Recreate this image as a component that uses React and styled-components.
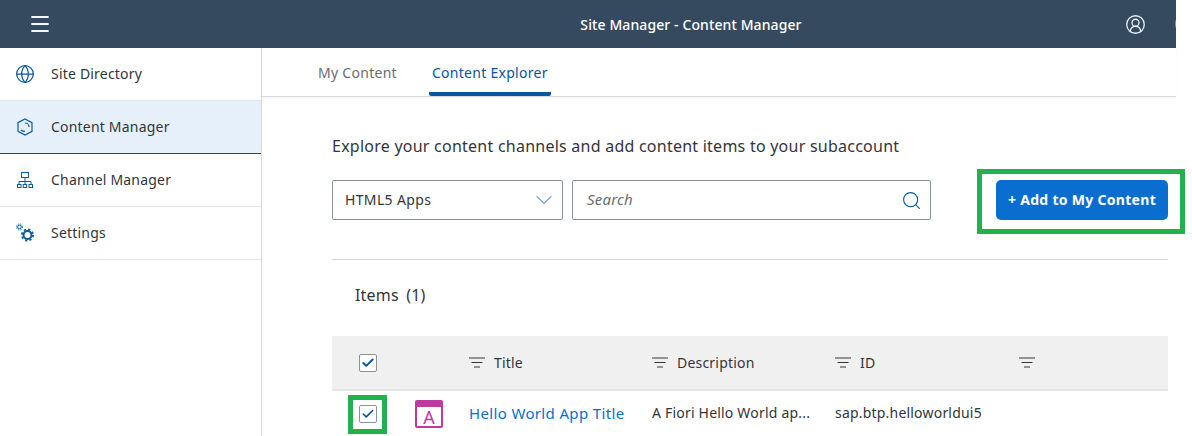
import React from "react";
import styled, { createGlobalStyle } from "styled-components";
import { Globe, Search, ChevronDown, Menu, Check, CircleUserRound } from "lucide-react";

const GlobalStyle = createGlobalStyle`
  html, body {
    margin: 0;
    height: 100%;
    background: #fff;
    overflow: hidden;
    font-family: "Noto Sans", "Open Sans", sans-serif;
    color: #32363a;
    letter-spacing: 0.2px;
  }
`;

const Page = styled.div`
  width: 1176px;
  height: 436px;
  display: flex;
  flex-direction: column;
`;

const Header = styled.header`
  height: 48px;
  flex: none;
  background: #354a5f;
  color: #fff;
  display: grid;
  grid-template-columns: 262px 1fr 56px;
  align-items: center;
  overflow: hidden;
`;

const MenuButton = styled.div`
  padding-left: 28px;
  display: flex;
  color: #f2f7fd;
`;

const HeaderTitle = styled.div`
  text-align: center;
  font-size: 14px;
  font-weight: 500;
  letter-spacing: 0.1px;
`;

const HeaderRight = styled.div`
  display: flex;
  align-items: center;
  gap: 29px;
  padding-left: 5px;
  color: #e4effb;
  svg {
    flex: none;
  }
`;

const Avatar = styled.div`
  width: 22px;
  height: 22px;
  flex: none;
  border-radius: 50%;
  border: 2px solid #5aa6ee;
  box-sizing: border-box;
`;

const Body = styled.div`
  flex: 1;
  display: flex;
  min-height: 0;
`;

const Sidebar = styled.nav`
  width: 261px;
  flex: none;
  border-right: 1px solid #d9d9d9;
`;

const NavItem = styled.div`
  height: 52px;
  display: flex;
  align-items: center;
  gap: 16px;
  padding-left: 15px;
  font-size: 14px;
  background: ${(p) => (p.$active ? "#e5f0fa" : "#fff")};
  border-bottom: 1px solid ${(p) => (p.$active ? "#0a4f92" : "#e5e5e5")};
  svg {
    color: #0b5aa0;
    flex: none;
  }
`;

const NavLabel = styled.span`
  padding-bottom: 2px;
`;

const Main = styled.main`
  flex: 1;
  min-width: 0;
`;

const TabBar = styled.div`
  height: 48px;
  display: flex;
  gap: 29px;
  padding-left: 53px;
  border-bottom: 1px solid #d9d9d9;
  box-shadow: 0 1px 2px rgba(0, 0, 0, 0.06);
`;

const Tab = styled.div`
  padding: 0 3px;
  font-size: 14px;
  letter-spacing: 0.28px;
  line-height: 50px;
  height: 44px;
  color: ${(p) => (p.$active ? "#0854a0" : "#6a6d70")};
  border-bottom: ${(p) => (p.$active ? "4px solid #0854a0" : "none")};
  border-radius: 0 0 2px 2px;
`;

const Content = styled.section`
  padding: 39px 8px 0 70px;
`;

const Heading = styled.h2`
  margin: 0;
  font-size: 16px;
  font-weight: 400;
  line-height: 20px;
  letter-spacing: 0.24px;
`;

const Toolbar = styled.div`
  display: flex;
  align-items: center;
  margin-top: 24px;
  padding-bottom: 39px;
  border-bottom: 1px solid #d9d9d9;
`;

const Select = styled.div`
  width: 231px;
  height: 40px;
  box-sizing: border-box;
  border: 1px solid #89919a;
  border-radius: 2px;
  display: flex;
  align-items: center;
  justify-content: space-between;
  padding: 0 4px 0 12px;
  font-size: 14px;
  letter-spacing: 0.35px;
  svg {
    color: #0b5aa0;
  }
`;

const SearchBox = styled.div`
  width: 359px;
  height: 40px;
  margin-left: 9px;
  box-sizing: border-box;
  border: 1px solid #89919a;
  border-radius: 2px;
  display: flex;
  align-items: center;
  justify-content: space-between;
  padding: 0 8px 0 14px;
  font-size: 15px;
  font-style: italic;
  color: #6a6d70;
  svg {
    color: #0b5aa0;
  }
`;

const FieldText = styled.span`
  padding-bottom: 2px;
`;

const Marked = styled.div`
  position: relative;
  width: fit-content;
  margin-left: ${(p) => p.$left || 0}px;
  &::after {
    content: "";
    position: absolute;
    inset: ${(p) => p.$ring};
    border: 5px solid #22b14c;
    pointer-events: none;
  }
`;

const AddButton = styled.button`
  display: block;
  width: 172px;
  height: 40px;
  border: none;
  border-radius: 5px;
  background: #0a6ed1;
  color: #fff;
  font: 700 14px "Noto Sans", sans-serif;
  letter-spacing: 0.3px;
  padding: 0 0 2px;
`;

const ItemsTitle = styled.div`
  height: 70px;
  padding: 0 0 6px 23px;
  display: flex;
  align-items: center;
  font-size: 16px;
  word-spacing: 3px;
`;

const Row = styled.div`
  display: grid;
  grid-template-columns: 72px 65px 183px 183px 184px 149px;
  align-items: center;
  font-size: 14px;
`;

const HeadRow = styled(Row)`
  height: 53px;
  background: #f0f0f0;
  border-bottom: 2px solid #e5e5e5;
`;

const DataRow = styled(Row)`
  height: 45px;
`;

const CheckCell = styled.div`
  padding-left: 27px;
`;

const CheckBox = styled.div`
  width: 18px;
  height: 18px;
  box-sizing: border-box;
  border: 1px solid #89919a;
  border-radius: 2px;
  background: #fff;
  display: flex;
  align-items: center;
  justify-content: center;
  color: #0854a0;
`;

const ColumnHead = styled.div`
  display: flex;
  align-items: center;
  gap: 9px;
`;

const FilterIcon = styled.svg`
  width: 16px;
  height: 12px;
  flex: none;
  stroke: #32363a;
  stroke-width: 1;
`;

const AppTile = styled.div`
  width: 28px;
  height: 28px;
  margin-left: 11px;
  box-sizing: border-box;
  border: 2px solid #bf399e;
  border-top-width: 7px;
  border-radius: 2px;
  color: #bf399e;
  font-size: 18px;
  line-height: 20px;
  text-align: center;
`;

const Cell = styled.span`
  padding-bottom: 2px;
`;

const TitleLink = styled(Cell)`
  color: #0a6ed1;
  font-size: 15px;
  letter-spacing: 0.35px;
`;

const Gears = () => (
  <svg width="20" height="20" viewBox="0 0 20 20" fill="none" stroke="currentColor">
    <circle cx="12.5" cy="12" r="4" strokeWidth="2" />
    <circle cx="12.5" cy="12" r="5.6" strokeWidth="1.8" strokeDasharray="2.2 2.2" />
    <circle cx="4.5" cy="4" r="1.8" strokeWidth="1" />
    <circle cx="4.5" cy="4" r="3" strokeWidth="1" strokeDasharray="1.2 1.2" />
  </svg>
);

const Cube = () => (
  <svg width="20" height="20" viewBox="0 0 20 20" fill="none" stroke="currentColor" strokeWidth="1.2">
    <path d="M10 2l7 3.6v8.8L10 18l-7-3.6V5.6z" />
    <path d="M6 13c1 1 2.5 1.4 4 1.4M10 6c2 0 4 1.6 4 4" />
  </svg>
);

const OrgChart = () => (
  <svg width="20" height="20" viewBox="0 0 20 20" fill="none" stroke="currentColor" strokeWidth="1">
    <rect x="6.5" y="2.5" width="7" height="5" />
    <path d="M10 7.5v4M4 14v-2.5h12V14M10 11.5V14" />
    <rect x="2.5" y="14.5" width="3.5" height="3" />
    <rect x="8.2" y="14.5" width="3.5" height="3" />
    <rect x="14" y="14.5" width="3.5" height="3" />
  </svg>
);

const Filter = () => (
  <FilterIcon viewBox="0 0 16 12">
    <path d="M0 1h16M2.5 5.5h11M5 10h6" />
  </FilterIcon>
);

const navItems = [
  { label: "Site Directory", icon: <Globe size={20} strokeWidth={1.5} /> },
  { label: "Content Manager", icon: <Cube />, active: true },
  { label: "Channel Manager", icon: <OrgChart /> },
  { label: "Settings", icon: <Gears /> },
];

const columns = ["Title", "Description", "ID", ""];

const App = () => {
  return (
    <Page>
      <GlobalStyle />
      <Header>
        <MenuButton>
          <Menu size={24} strokeWidth={1.8} />
        </MenuButton>
        <HeaderTitle>Site Manager - Content Manager</HeaderTitle>
        <HeaderRight>
          <CircleUserRound size={21} strokeWidth={1.5} />
          <Avatar />
        </HeaderRight>
      </Header>
      <Body>
        <Sidebar>
          {navItems.map((item) => (
            <NavItem key={item.label} $active={item.active}>
              {item.icon}
              <NavLabel>{item.label}</NavLabel>
            </NavItem>
          ))}
        </Sidebar>
        <Main>
          <TabBar>
            <Tab>My Content</Tab>
            <Tab $active>Content Explorer</Tab>
          </TabBar>
          <Content>
            <Heading>Explore your content channels and add content items to your subaccount</Heading>
            <Toolbar>
              <Select>
                <FieldText>HTML5 Apps</FieldText>
                <ChevronDown size={28} strokeWidth={0.8} />
              </Select>
              <SearchBox>
                <FieldText>Search</FieldText>
                <Search size={21} strokeWidth={1.3} />
              </SearchBox>
              <Marked $left={65} $ring="-11px -17px -14px -19px">
                <AddButton>+ Add to My Content</AddButton>
              </Marked>
            </Toolbar>
            <ItemsTitle>Items (1)</ItemsTitle>
            <HeadRow>
              <CheckCell>
                <CheckBox>
                  <Check size={14} strokeWidth={3.4} />
                </CheckBox>
              </CheckCell>
              <span />
              {columns.map((col) => (
                <ColumnHead key={col || "actions"}>
                  <Filter />
                  {col}
                </ColumnHead>
              ))}
            </HeadRow>
            <DataRow>
              <CheckCell>
                <Marked $ring="-10px -10px -11px -11px">
                  <CheckBox>
                    <Check size={14} strokeWidth={2.8} />
                  </CheckBox>
                </Marked>
              </CheckCell>
              <AppTile>A</AppTile>
              <TitleLink>Hello World App Title</TitleLink>
              <Cell>A Fiori Hello World ap...</Cell>
              <Cell>sap.btp.helloworldui5</Cell>
              <span />
            </DataRow>
          </Content>
        </Main>
      </Body>
    </Page>
  );
};

export default App;
